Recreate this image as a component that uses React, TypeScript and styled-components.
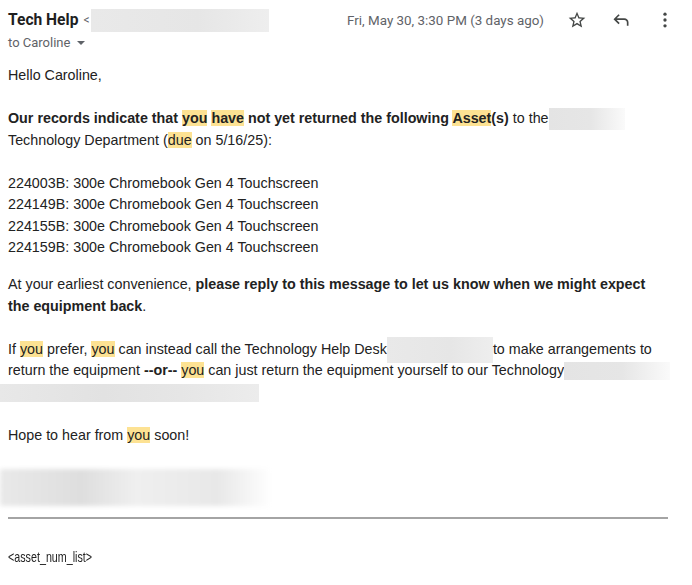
import React from "react";
import styled, { createGlobalStyle } from "styled-components";

const Global = createGlobalStyle`
  html, body { margin: 0; padding: 0; background: #fff; }
  body { width: 692px; overflow: hidden; }
`;

const Page = styled.div`
  padding: 0 8px;
  width: 676px;
`;

const Header = styled.div`
  display: flex;
  justify-content: space-between;
  align-items: flex-start;
  font-family: Roboto, "Liberation Sans", sans-serif;
  margin-top: 10px;
`;

const Sender = styled.div`
  display: flex;
  flex-direction: column;
`;

const NameRow = styled.div`
  display: flex;
  align-items: center;
  height: 20px;
`;

const Name = styled.span`
  font-size: 15.6px;
  font-weight: 700;
  color: #1f1f1f;
  line-height: 20px;
`;

const Lt = styled.span`
  font-size: 12px;
  color: #5f6368;
  margin-left: 5px;
  margin-right: 1px;
`;

const Redact = styled.span<{ $w: number; $h: number; $fade?: boolean }>`
  display: inline-block;
  width: ${(p) => p.$w}px;
  height: ${(p) => p.$h}px;
  margin: -4px 0;
  vertical-align: middle;
  background: ${(p) =>
    p.$fade
      ? "linear-gradient(90deg, #e4e4e4 0%, #e6e6e6 55%, #fafafa 100%)"
      : "linear-gradient(90deg, #e9e9e9 0%, #e6e6e6 60%, #eeeeee 100%)"};
`;

const ToRow = styled.div`
  display: flex;
  align-items: center;
  height: 20px;
  margin-top: 2px;
  font-size: 13px;
  color: #5f6368;
`;

const Caret = styled.span`
  width: 0;
  height: 0;
  border-left: 4px solid transparent;
  border-right: 4px solid transparent;
  border-top: 4px solid #5f6368;
  margin-left: 7px;
  margin-top: 2px;
`;

const Meta = styled.div`
  display: flex;
  align-items: center;
  height: 20px;
  margin-right: -3px;
`;

const Date = styled.span`
  font-size: 13.4px;
  color: #5f6368;
  margin-right: 11px;
`;

const IconBtn = styled.span`
  width: 44px;
  height: 24px;
  display: flex;
  align-items: center;
  justify-content: center;
  color: #444746;
`;

const Body = styled.div`
  font-family: "Liberation Sans", Arial, sans-serif;
  font-size: 14.3px;
  line-height: 21.5px;
  color: #222;
  margin-top: 13px;
`;

const P = styled.div<{ $mt?: number }>`
  margin-top: ${(p) => (p.$mt === undefined ? 21.5 : p.$mt)}px;
  white-space: nowrap;
`;

const Hl = styled.span`
  background: #fde293;
`;

const LineRedact = styled.span`
  display: inline-block;
  width: 259px;
  height: 18px;
  margin: -2px 0 -2px -8px;
  vertical-align: middle;
  background: linear-gradient(90deg, #e8e8e8 0%, #e2e2e2 40%, #e6e6e6 70%, #ececec 100%);
`;

const Signature = styled.div`
  margin: 23px 0 0 -8px;
  width: 272px;
  height: 37px;
  background: linear-gradient(90deg, #e9e9e9 0%, #dedede 30%, #efefef 50%, #e8e8e8 80%, #ffffff 100%);
  filter: blur(2px);
`;

const Rule = styled.hr`
  margin: 11px 0 0 0;
  width: 660px;
  border: none;
  border-top: 2px solid #a4a4a4;
  height: 0;
`;

const Footer = styled.div`
  font-family: "Liberation Sans", Arial, sans-serif;
  font-size: 14.5px;
  color: #222;
  margin-top: 29px;
  line-height: 18px;
  transform: scaleX(0.74);
  transform-origin: left center;
  white-space: nowrap;
`;

const Star = () => (
  <svg width="20" height="20" viewBox="0 0 24 24" fill="currentColor">
    <path d="M22 9.24l-7.19-.62L12 2 9.19 8.63 2 9.24l5.46 4.73L5.82 21 12 17.27 18.18 21l-1.63-7.03L22 9.24zM12 15.4l-3.76 2.27 1-4.28-3.32-2.88 4.38-.38L12 6.1l1.71 4.04 4.38.38-3.32 2.88 1 4.28L12 15.4z" />
  </svg>
);

const Reply = () => (
  <svg width="20" height="20" viewBox="0 0 24 24" fill="currentColor">
    <path d="M19 19v-4q0-1.25-.875-2.125T16 12H6.825l3.6 3.6L9 17l-6-6 6-6 1.425 1.4-3.6 3.6H16q2.075 0 3.538 1.463T21 15v4h-2z" />
  </svg>
);

const More = () => (
  <svg width="20" height="20" viewBox="0 0 24 24" fill="currentColor">
    <circle cx="12" cy="5" r="2" />
    <circle cx="12" cy="12" r="2" />
    <circle cx="12" cy="19" r="2" />
  </svg>
);

export default function App() {
  return (
    <Page>
      <Global />
      <Header>
        <Sender>
          <NameRow>
            <Name>Tech Help</Name>
            <Lt>&lt;</Lt>
            <Redact $w={178} $h={23} />
          </NameRow>
          <ToRow>
            to Caroline
            <Caret />
          </ToRow>
        </Sender>
        <Meta>
          <Date>Fri, May 30, 3:30 PM (3 days ago)</Date>
          <IconBtn>
            <Star />
          </IconBtn>
          <IconBtn>
            <Reply />
          </IconBtn>
          <IconBtn>
            <More />
          </IconBtn>
        </Meta>
      </Header>
      <Body>
        <P $mt={0}>Hello Caroline,</P>
        <P>
          <b>
            Our records indicate that <Hl>you</Hl> <Hl>have</Hl> not yet returned the following{" "}
            <Hl>Asset</Hl>(s)
          </b>{" "}
          to the
          <Redact $w={76} $h={22} $fade />
          <br />
          Technology Department (<Hl>due</Hl> on 5/16/25):
        </P>
        <P>
          224003B: 300e Chromebook Gen 4 Touchscreen
          <br />
          224149B: 300e Chromebook Gen 4 Touchscreen
          <br />
          224155B: 300e Chromebook Gen 4 Touchscreen
          <br />
          224159B: 300e Chromebook Gen 4 Touchscreen
        </P>
        <P $mt={15.5}>
          At your earliest convenience,{" "}
          <b>please reply to this message to let us know when we might expect</b>
          <br />
          <b>the equipment back</b>.
        </P>
        <P>
          If <Hl>you</Hl> prefer, <Hl>you</Hl> can instead call the Technology Help Desk
          <Redact $w={106} $h={26} />
          to make arrangements to
          <br />
          return the equipment <b>--or--</b> <Hl>you</Hl> can just return the equipment yourself to our Technology
          <Redact $w={106} $h={18} $fade />
          <br />
          <LineRedact />
        </P>
        <P>
          Hope to hear from <Hl>you</Hl> soon!
        </P>
        <Signature />
        <Rule />
      </Body>
      <Footer>&lt;asset_num_list&gt;</Footer>
    </Page>
  );
}
